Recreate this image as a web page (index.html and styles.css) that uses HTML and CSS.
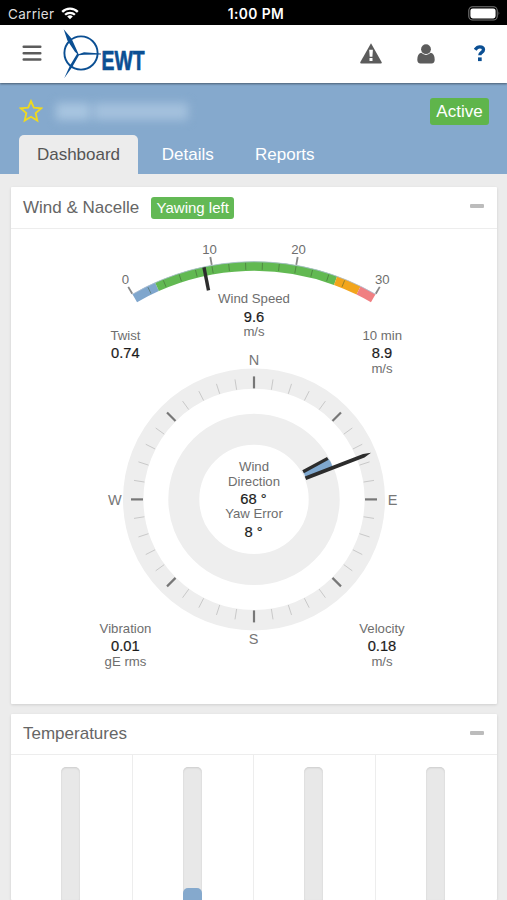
FILE: index.html
```html
<!DOCTYPE html>
<html lang="en">
<head>
<meta charset="utf-8">
<title>EWT Dashboard</title>
<link rel="stylesheet" href="styles.css">
</head>
<body>
<div class="status">
  <div class="carrier">
    <span>Carrier</span>
    <svg width="18" height="13" viewBox="0 0 18 13" fill="none" stroke="#fff" stroke-width="2.3"><path d="M1.2 4.9a11 11 0 0 1 15.6 0M4.1 7.8a7 7 0 0 1 9.8 0"/><path d="M9 12.3 6.2 9.6a4 4 0 0 1 5.6 0z" fill="#fff" stroke="none"/></svg>
  </div>
  <div class="time">1:00 PM</div>
  <svg class="battery" width="33" height="15" viewBox="0 0 33 15"><rect x=".8" y=".8" width="28.4" height="13.2" rx="3.8" fill="none" stroke="#777" stroke-width="1.1"/><rect x="2.4" y="2.4" width="25.2" height="10" rx="2.3" fill="#fff"/><path d="M30.6 5.3q1.8 2.1 0 4.2z" fill="#777"/></svg>
</div>
<header class="topbar">
  <svg class="menu" width="20" height="17" viewBox="0 0 20 17" stroke="#5c5c5c" stroke-width="2.5" stroke-linecap="round"><path d="M1.7 1.8h16.6M1.7 8.2h16.6M1.7 14.6h16.6"/></svg>
  <svg class="logo" width="90" height="54" viewBox="62 28 90 54">
    <circle cx="81" cy="53" r="16.6" fill="none" stroke="#0b4f93" stroke-width="1.9"/>
    <path d="M78.6 54.3 77.3 51.2 71.5 38.5 63.7 29.2 67.4 40.5 74.9 51.8 77.1 53.8 70 65.5 64.2 78.2 72.1 67.2 79 55.2 84 54.8 101 54.5 101 53.4 84 52.3z" fill="#0b4f93"/>
    <text class="logo-text" x="101.5" y="70.3" textLength="43" lengthAdjust="spacingAndGlyphs">EWT</text>
  </svg>
  <div class="actions">
    <svg width="22" height="21" viewBox="0 0 22 21"><path d="M11 .3 21.6 19Q22.3 20.6 20.7 20.6H1.3Q-.3 20.6.4 19z" fill="#5c5c5c"/><path d="M9.2 6.8h3.7l-.5 7H9.7zM9.5 15.1h3v2.8h-3z" fill="#fff"/></svg>
    <svg width="18" height="20" viewBox="0 0 18 20" fill="#5c5c5c"><circle cx="9" cy="5.2" r="4.9"/><path d="M4.2 8.8Q9 13.1 13.8 8.8 17.7 9.8 17.7 15.8 17.7 19.5 14.5 19.5H3.5Q.3 19.5.3 15.8.3 9.8 4.2 8.8z"/></svg>
    <svg width="12" height="17" viewBox="0 0 12 17"><path d="M1.2 4.8Q3 1.9 5.8 1.9q3.7 0 3.7 2.9c0 2.8-3.7 2.5-3.7 5.5" fill="none" stroke="#0b4f93" stroke-width="3.3"/><path d="M4 12.4h3.7v3.7H4z" fill="#0b4f93"/></svg>
  </div>
</header>
<section class="hero">
  <div class="site">
    <svg class="star" width="24" height="24" viewBox="0 0 24 24" fill="none" stroke="#efd91f" stroke-width="1.9"><path d="M12 2.2 14.8 8.7 22.2 9.4 16.7 14.1 18.3 21.5 12 17.8 5.7 21.5 7.3 14.1 1.8 9.4 9.2 8.7z"/></svg>
    <div class="masked"><i></i><b></b></div>
    <span class="active">Active</span>
  </div>
  <nav class="tabs"><a class="tab on">Dashboard</a><a class="tab">Details</a><a class="tab">Reports</a></nav>
</section>
<main>
  <section class="card wind">
    <div class="card-head"><span>Wind &amp; Nacelle</span><span class="badge">Yawing left</span><i class="minus"></i></div>
    <svg class="chart" width="486" height="474" viewBox="11 229 486 474">
      <g fill="none" stroke-width="9.2" id="zones"></g>
      <g id="speed-ticks"></g>
      <path d="M204 267.3 208.5 290.3" stroke="#2c2c2c" stroke-width="3.4"/>
      <circle cx="254" cy="499.4" r="120.8" fill="none" stroke="#eeeeee" stroke-width="20.4"/>
      <circle cx="254" cy="499.4" r="70.2" fill="none" stroke="#eeeeee" stroke-width="31"/>
      <g id="compass-ticks"></g>
      <path d="M303.5 472 328 458.5Q331.8 462.3 332.5 468L306 478.5z" fill="#7fa8cf"/>
      <path d="M302.3 470.2 327 457 328.6 459.8 303.9 473.3zM304.8 476.5 363 454 371 452.8 364.5 457.5 306.2 480z" fill="#2c2c2c"/>
      <g class="label">
        <text x="125.3" y="284">0</text><text x="209.5" y="253.5">10</text><text x="298.5" y="253.5">20</text><text x="382.3" y="284">30</text>
        <text x="254" y="303">Wind Speed</text><text x="254" y="335.5">m/s</text>
        <text x="125.5" y="340">Twist</text><text x="382.3" y="340">10 min</text><text x="382" y="372.5">m/s</text>
        <text x="254" y="471">Wind</text><text x="254" y="485.5">Direction</text><text x="254" y="518">Yaw Error</text>
        <text x="125.5" y="633">Vibration</text><text x="125.5" y="665.5">gE rms</text>
        <text x="382" y="633">Velocity</text><text x="382" y="665.5">m/s</text>
      </g>
      <g class="value">
        <text x="254" y="321.5">9.6</text><text x="125.3" y="358">0.74</text><text x="382" y="358">8.9</text>
        <text x="253.5" y="504">68 °</text><text x="253.5" y="536.5">8 °</text>
        <text x="125.3" y="651">0.01</text><text x="382" y="651">0.18</text>
      </g>
      <g class="point"><text x="254" y="364.5">N</text><text x="392.7" y="504.5">E</text><text x="253.7" y="643.5">S</text><text x="114.8" y="504.5">W</text></g>
    </svg>
  </section>
  <section class="card temperatures">
    <div class="card-head"><span>Temperatures</span><i class="minus"></i></div>
    <div class="temps">
      <div class="cell"><div class="tube"></div></div>
      <div class="cell"><div class="tube"><div class="fill"></div></div></div>
      <div class="cell"><div class="tube"></div></div>
      <div class="cell"><div class="tube"></div></div>
    </div>
  </section>
</main>
<script src="gauge.js"></script>
</body>
</html>
```
FILE: styles.css
```css
* { box-sizing: border-box; }
html, body { height: 100%; overflow: hidden; }
body { margin: 0; background: #ececec; color: #666; font-family: "Liberation Sans", Arial, sans-serif; display: flex; flex-direction: column; }
svg { display: block; flex: none; }
.status { height: 25px; flex: none; background: #000; color: #fff; display: grid; grid-template-columns: 1fr auto 1fr; align-items: center; padding: 2px 6px 0 8px; font: 13.5px Inter, sans-serif; }
.carrier { display: flex; gap: 7px; align-items: center; color: #ddd; letter-spacing: .3px; }
.time { font-weight: 600; font-size: 13.8px; letter-spacing: .4px; padding-left: 3px; }
.battery { justify-self: end; }
.topbar { height: 58px; flex: none; background: #fff; display: flex; align-items: flex-start; padding: 4px 21px 0 22px; box-shadow: 0 1px 2px rgba(0,0,0,.45); position: relative; z-index: 1; }
.menu { margin: 16px 20px 0 0; }
.logo { margin-top: -1px; overflow: visible; }
.logo-text { font: bold 28px "Liberation Sans", sans-serif; fill: #0b4f93; stroke: #0b4f93; stroke-width: .7px; }
.actions { margin: 14px 0 0 auto; display: flex; gap: 35px; align-items: center; }
.actions svg:last-child { margin-left: 4px; }
.hero { height: 91px; flex: none; background: #85a9cd; display: flex; flex-direction: column; justify-content: space-between; }
.site { display: flex; align-items: center; height: 56px; padding: 0 18px 0 19px; }
.masked { display: flex; gap: 4px; margin-left: 13px; filter: blur(5px); }
.masked i { width: 34px; height: 17px; background: #a8c5e0; }
.masked b { width: 94px; height: 17px; background: #a4c1dd; }
.active { margin-left: auto; background: #5fb54b; color: #fff; font-size: 17px; line-height: 27px; width: 59px; text-align: center; border-radius: 3px; }
.tabs { display: flex; margin: -17px 0 0 19px; height: 39px; }
.tab { color: #fff; font-size: 17px; line-height: 39px; padding: 0 17.5px; margin-right: 6.3px; }
.tab.on { width: 119px; text-align: center; padding: 0; background: #ececec; color: #555; border-radius: 5px 5px 0 0; }
main { flex: 1; min-height: 0; padding: 13px 10px 0 11px; display: flex; flex-direction: column; gap: 10px; }
.card { flex: none; background: #fff; border-radius: 1px; box-shadow: 0 1px 3px rgba(0,0,0,.12); }
.card.wind { height: 517px; }
.card.temperatures { flex: 1; min-height: 0; display: flex; flex-direction: column; }
.card-head { flex: none; height: 41px; border-bottom: 1px solid #ededed; padding: 0 13px 0 12px; display: flex; align-items: center; font-size: 17px; }
.wind .card-head { height: 42px; }
.badge { margin: 1px 0 0 12px; width: 83px; text-align: center; line-height: 22px; font-size: 15px; color: #fff; background: #63b955; border-radius: 3px; }
.minus { width: 14px; height: 4px; margin: -3px 0 0 auto; background: #bcbcbc; border-radius: 1px; }
text { text-anchor: middle; }
.logo text { text-anchor: start; }
.label { font-size: 13.2px; fill: #6e6e6e; }
.value { font-size: 14.7px; fill: #1c1c1c; stroke: #1c1c1c; stroke-width: .2px; }
.point { font-size: 14.5px; fill: #777; }
.temps { display: grid; grid-template-columns: repeat(4, 1fr); flex: 1; min-height: 0; }
.cell { border-right: 1px solid #ededed; padding: 12px 1px 0 0; display: flex; justify-content: center; }
.cell:last-child { border: 0; }
.tube { width: 19px; border-radius: 5px 5px 0 0; background: #e8e8e8; box-shadow: inset 0 1px 2px rgba(0,0,0,.12); padding-top: 121px; }
.fill { height: 100%; background: #85a9cd; border-radius: 5px 5px 0 0; }
```
FILE: gauge.js
```js
const NS = "http://www.w3.org/2000/svg";
const polar = (cy, r, deg) => {
  const a = deg * Math.PI / 180;
  return (254 + r * Math.sin(a)).toFixed(2) + " " + (cy - r * Math.cos(a)).toFixed(2);
};
function add(id, d, stroke, width) {
  const p = document.createElementNS(NS, "path");
  p.setAttribute("d", d);
  p.setAttribute("stroke", stroke);
  if (width) p.setAttribute("stroke-width", width);
  document.getElementById(id).appendChild(p);
}
// Wind speed scale: 0 to 30 m/s spans 60 degrees.
const CY = 504.7;
const angle = v => v * 2 - 30;
[[0, 3, "#7fa6cd"], [3, 25, "#62b952"], [25, 28, "#f2a51c"], [28, 30, "#f07f82"]].forEach(([a, b, c]) =>
  add("zones", `M${polar(CY, 238.5, angle(a))}A238.5 238.5 0 0 1 ${polar(CY, 238.5, angle(b))}`, c));
add("zones", `M${polar(CY, 243, -30)}A243 243 0 0 1 ${polar(CY, 243, 30)}`, "#a9bdd0", 0.8);
for (let v = 2; v < 28; v += 2)
  add("speed-ticks", `M${polar(CY, 235, angle(v))}L${polar(CY, 242, angle(v))}`, "rgba(60,90,50,.5)", 1);
[0, 10, 20, 30].forEach(v =>
  add("speed-ticks", `M${polar(CY, 243.5, angle(v))}L${polar(CY, 251.5, angle(v))}`, "#888", 1.8));
// Compass: a major mark every 45 degrees, four minor marks between.
for (let a = 0; a < 360; a += 9) {
  const major = a % 45 === 0;
  add("compass-ticks", `M${polar(499.4, 111, a)}L${polar(499.4, major ? 123 : 121.5, a)}`, major ? "#777" : "#c9c9c9", major ? 2.2 : 1);
}
```
